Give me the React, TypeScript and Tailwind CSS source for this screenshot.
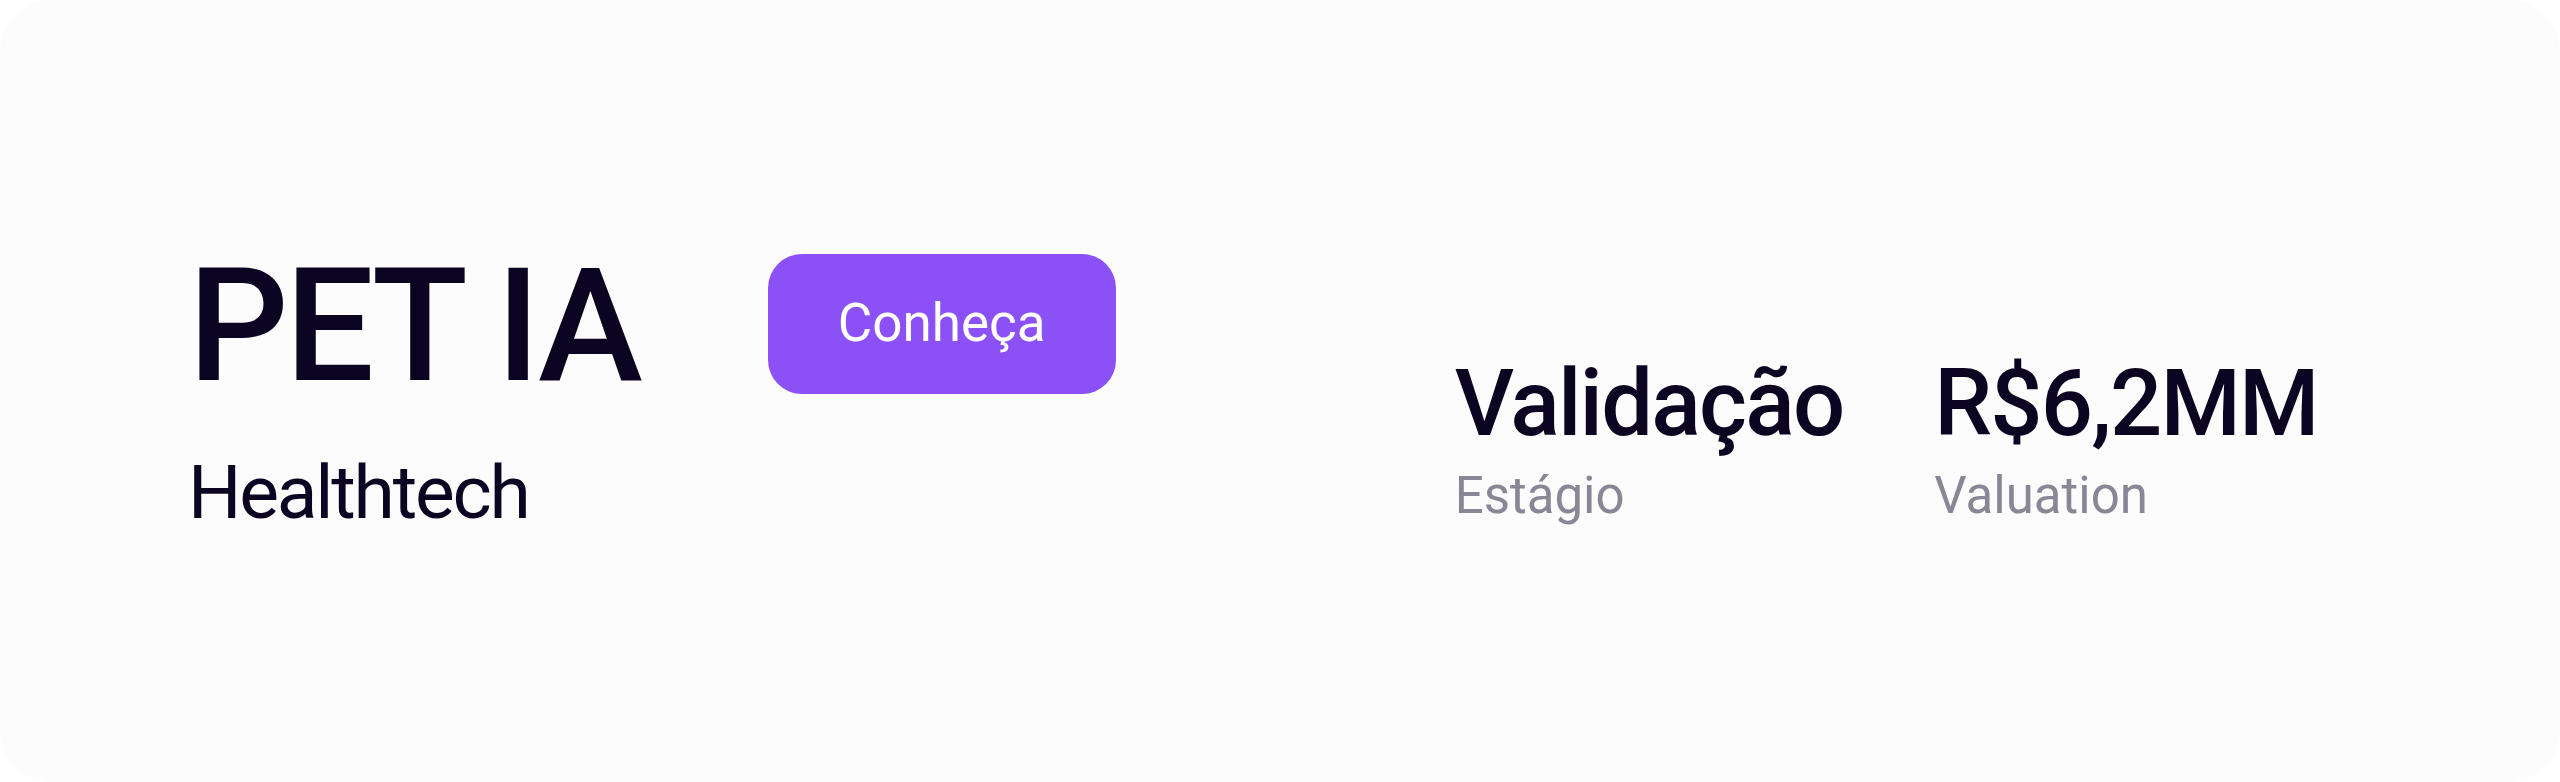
import React from "react";

function Stat({ value, label }: { value: string; label: string }) {
    return (
        <div className="flex flex-col">
            <span className="text-[92px] leading-none font-medium text-[#0b0522] tracking-[-0.02em]">{value}</span>
            <span className="mt-[20px] text-[51px] leading-none text-[#8a8696]">{label}</span>
        </div>
    );
}

export default function App() {
    return (
        <div className="w-full h-[782px] bg-white" style={{ fontFamily: "Roboto, 'Noto Sans', sans-serif" }}>
            <div className="h-full w-full rounded-[52px] bg-[#fdfcfd] flex items-center pl-[188px]">
                <div className="flex flex-col pb-[6px]">
                    <h1 className="text-[158px] leading-none font-medium text-[#0b0522] tracking-[-0.025em]">PET IA</h1>
                    <p className="mt-[50px] text-[75px] leading-none font-normal text-[#0b0522] tracking-[-0.03em]">Healthtech</p>
                </div>
                <button className="self-start mt-[254px] ml-[129px] w-[348px] h-[140px] rounded-[34px] bg-[#8b50f6] text-white text-[53px] font-normal">
                    Conheça
                </button>
                <div className="self-start mt-[358px] ml-[339px] flex gap-[91px]">
                    <Stat value="Validação" label="Estágio" />
                    <Stat value="R$6,2MM" label="Valuation" />
                </div>
            </div>
        </div>
    );
}
